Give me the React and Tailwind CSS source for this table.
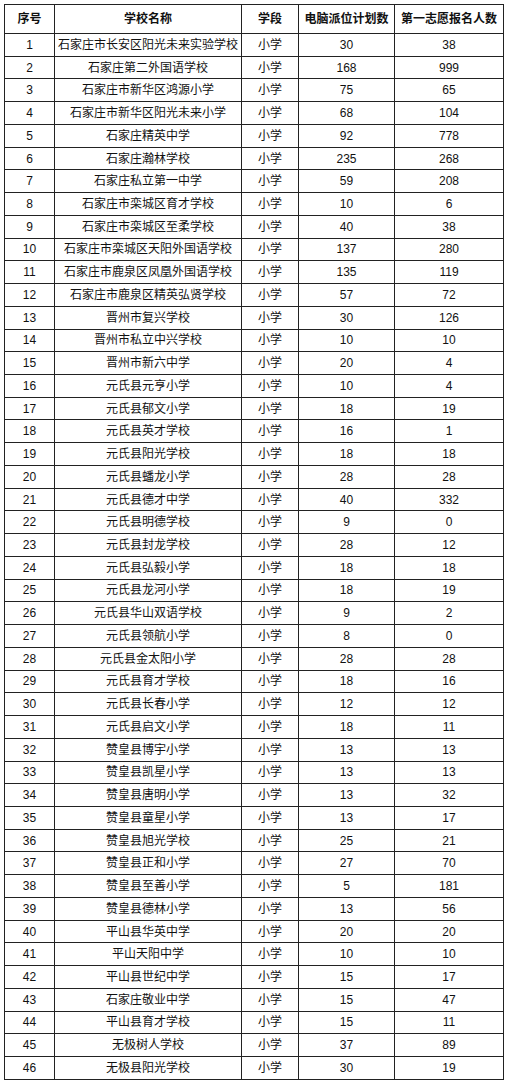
const rows = [
  ["1", "石家庄市长安区阳光未来实验学校", "30", "38"],
  ["2", "石家庄第二外国语学校", "168", "999"],
  ["3", "石家庄市新华区鸿源小学", "75", "65"],
  ["4", "石家庄市新华区阳光未来小学", "68", "104"],
  ["5", "石家庄精英中学", "92", "778"],
  ["6", "石家庄瀚林学校", "235", "268"],
  ["7", "石家庄私立第一中学", "59", "208"],
  ["8", "石家庄市栾城区育才学校", "10", "6"],
  ["9", "石家庄市栾城区至柔学校", "40", "38"],
  ["10", "石家庄市栾城区天阳外国语学校", "137", "280"],
  ["11", "石家庄市鹿泉区凤凰外国语学校", "135", "119"],
  ["12", "石家庄市鹿泉区精英弘贤学校", "57", "72"],
  ["13", "晋州市复兴学校", "30", "126"],
  ["14", "晋州市私立中兴学校", "10", "10"],
  ["15", "晋州市新六中学", "20", "4"],
  ["16", "元氏县元亨小学", "10", "4"],
  ["17", "元氏县郁文小学", "18", "19"],
  ["18", "元氏县英才学校", "16", "1"],
  ["19", "元氏县阳光学校", "18", "18"],
  ["20", "元氏县蟠龙小学", "28", "28"],
  ["21", "元氏县德才中学", "40", "332"],
  ["22", "元氏县明德学校", "9", "0"],
  ["23", "元氏县封龙学校", "28", "12"],
  ["24", "元氏县弘毅小学", "18", "18"],
  ["25", "元氏县龙河小学", "18", "19"],
  ["26", "元氏县华山双语学校", "9", "2"],
  ["27", "元氏县领航小学", "8", "0"],
  ["28", "元氏县金太阳小学", "28", "28"],
  ["29", "元氏县育才学校", "18", "16"],
  ["30", "元氏县长春小学", "12", "12"],
  ["31", "元氏县启文小学", "18", "11"],
  ["32", "赞皇县博宇小学", "13", "13"],
  ["33", "赞皇县凯星小学", "13", "13"],
  ["34", "赞皇县唐明小学", "13", "32"],
  ["35", "赞皇县童星小学", "13", "17"],
  ["36", "赞皇县旭光学校", "25", "21"],
  ["37", "赞皇县正和小学", "27", "70"],
  ["38", "赞皇县至善小学", "5", "181"],
  ["39", "赞皇县德林小学", "13", "56"],
  ["40", "平山县华英中学", "20", "20"],
  ["41", "平山天阳中学", "10", "10"],
  ["42", "平山县世纪中学", "15", "17"],
  ["43", "石家庄敬业中学", "15", "47"],
  ["44", "平山县育才学校", "15", "11"],
  ["45", "无极树人学校", "37", "89"],
  ["46", "无极县阳光学校", "30", "19"],
];

const headers = ["序号", "学校名称", "学段", "电脑派位计划数", "第一志愿报名人数"];

function App() {
  return (
    <div className="min-h-[1083px] bg-white pt-[4px] pl-[4px]">
      <table
        className="w-[499px] table-fixed border-collapse text-center text-[12px] text-[#111]"
        style={{ fontFamily: '"Liberation Sans", "Noto Sans CJK SC", sans-serif' }}
      >
        <colgroup>
          <col className="w-[50px]" />
          <col className="w-[187px]" />
          <col className="w-[57px]" />
          <col className="w-[96px]" />
          <col className="w-[109px]" />
        </colgroup>
        <thead>
          <tr className="h-[29px]">
            {headers.map((h) => (
              <th key={h} className="border border-[#222] p-0 font-bold leading-none">
                {h}
              </th>
            ))}
          </tr>
        </thead>
        <tbody>
          {rows.map((r) => (
            <tr key={r[0]} className="h-[22.74px]">
              <td className="border border-[#222] p-0 leading-none">{r[0]}</td>
              <td className="border border-[#222] p-0 leading-none whitespace-nowrap">{r[1]}</td>
              <td className="border border-[#222] p-0 leading-none">小学</td>
              <td className="border border-[#222] p-0 leading-none">{r[2]}</td>
              <td className="border border-[#222] p-0 leading-none">{r[3]}</td>
            </tr>
          ))}
        </tbody>
      </table>
    </div>
  );
}

export default App;
